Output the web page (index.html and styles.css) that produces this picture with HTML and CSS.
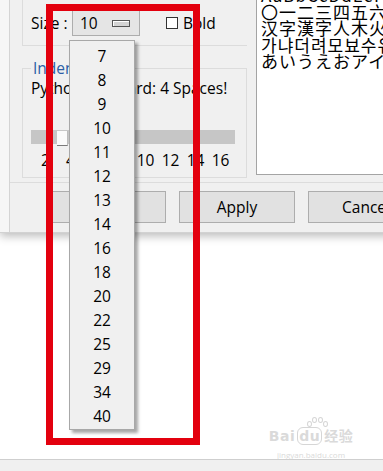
FILE: index.html
```html
<!DOCTYPE html>
<html lang="en">
<head>
    <meta charset="UTF-8">
    <meta name="viewport" content="width=device-width, initial-scale=1.0">
    <title>Font Settings</title>
    <link rel="stylesheet" href="styles.css">
</head>
<body>
    <div class="window">
        <div class="frame">
            <div class="panel">
                <div class="left-col">
                    <div class="font-box">
                        <div class="size-row">
                            <span class="label">Size :</span>
                            <div class="combo">
                                <span>10</span>
                                <svg class="combo-arrow" width="18" height="7" viewBox="0 0 18 7">
                                    <rect x="0.5" y="0.5" width="17" height="6" fill="#d4d4d4" stroke="#555555"/>
                                    <line x1="1" y1="1.5" x2="17" y2="1.5" stroke="#ffffff"/>
                                    <line x1="1.5" y1="1" x2="1.5" y2="6" stroke="#ffffff"/>
                                </svg>
                            </div>
                            <label class="check"><span class="box"></span>Bold</label>
                        </div>
                    </div>

                    <fieldset class="indent-box">
                        <legend>Indent Width</legend>
                        <p>Python Standard: 4 Spaces!</p>
                        <div class="track">
                            <div class="handle"></div>
                        </div>
                        <div class="ticks">
                            <span>2</span><span>4</span><span>6</span><span>8</span>
                            <span>10</span><span>12</span><span>14</span><span>16</span>
                        </div>
                    </fieldset>
                </div>

                <div class="sample">
                    <div class="sample-text">
                        <div>AaBbCcDdEeFfGgHhIiJj</div>
                        <div>〇一二三四五六七八九</div>
                        <div>汉字漢字人木火土金水</div>
                        <div>가냐더려모뵤수유즈치</div>
                        <div>あいうえおアイウエオ</div>
                    </div>
                </div>
            </div>

            <div class="buttons">
                <button>Ok</button>
                <button>Apply</button>
                <button>Cancel</button>
            </div>
        </div>
    </div>

    <!-- size dropdown -->
    <ul class="dropdown">
        <li>7</li><li>8</li><li>9</li><li>10</li>
        <li>11</li><li>12</li><li>13</li><li>14</li>
        <li>16</li><li>18</li><li>20</li><li>22</li>
        <li>25</li><li>29</li><li>34</li><li>40</li>
    </ul>

    <div class="highlight"></div>

    <div class="watermark">
        <div class="paw">
            <span></span><span></span><span></span><span></span>
        </div>
        <div class="wm-logo">Bai<span class="wm-du">du</span>经验</div>
        <div class="wm-url">jingyan.baidu.com</div>
    </div>

    <div class="taskbar"></div>
</body>
</html>
```

FILE: styles.css
```css
* {
    margin: 0;
    padding: 0;
    box-sizing: border-box;
}

body {
    font-family: 'Open Sans', 'Noto Sans', sans-serif;
    font-size: 15.5px;
    color: #000;
    background-color: #fff;
    width: 383px;
    height: 471px;
    overflow: hidden;
    position: relative;
}

/* Dialog window */
.window {
    height: 233px;
    background-color: #f6f6f6;
    padding-left: 9px;
    display: flex;
    box-shadow: 0 3px 9px rgba(0, 0, 0, 0.28);
    border-bottom: 1px solid #d2d2d2;
    width: 430px;
}

.frame {
    flex: 1;
    background-color: #f0f0f0;
    border-left: 1px solid #d4d4d4;
    display: flex;
    flex-direction: column;
}

.panel {
    height: 183px;
    border-bottom: 1px solid #dcdcdc;
    display: flex;
    padding-left: 12px;
}

.left-col {
    width: 225px;
    display: flex;
    flex-direction: column;
}

.font-box {
    height: 46px;
    border-left: 1px solid #dcdcdc;
    border-bottom: 1px solid #dcdcdc;
    padding: 10px 0 0 8px;
}

.size-row {
    display: flex;
    align-items: center;
    height: 26px;
}

.size-row .label {
    width: 41px;
}

.combo {
    width: 68px;
    height: 26px;
    background-color: #e5e5e5;
    border: 1px solid #adadad;
    display: flex;
    align-items: center;
    justify-content: space-between;
    padding: 0 9px 0 7px;
}

.combo-arrow {
    display: block;
}

.check {
    display: flex;
    align-items: center;
    margin-left: 26px;
}

.check .box {
    width: 12px;
    height: 12px;
    border: 1px solid #333;
    background-color: #fff;
    margin-right: 5px;
}

/* Indent width group */
.indent-box {
    margin-top: 12px;
    border: 1px solid #dcdcdc;
    padding: 0 8px 7px 8px;
    min-width: 0;
}

.indent-box legend {
    color: #2b5ea6;
    padding: 0 2px;
    line-height: 20px;
}

.indent-box p {
    line-height: 20px;
    white-space: nowrap;
}

.track {
    margin-top: 32px;
    width: 204px;
    height: 14px;
    background-color: #c6c6c6;
    position: relative;
}

.handle {
    position: absolute;
    left: 26px;
    top: 1px;
    width: 11px;
    height: 15px;
    background-color: #fafafa;
    border-bottom: 1px solid #7a7a7a;
    border-right: 1px solid #bcbcbc;
}

.ticks {
    display: flex;
    margin: 6px 0 0 2px;
    line-height: 20px;
}

.ticks span {
    width: 25px;
    text-align: center;
}

/* Sample text */
.sample {
    margin-left: 9px;
    flex: 1;
    height: 175px;
    background-color: #fff;
    border-left: 1px solid #a4a4a4;
    border-bottom: 1px solid #a4a4a4;
    overflow: hidden;
}

.sample-text {
    margin: -13px 0 0 4px;
    font-family: 'Noto Sans CJK SC', 'Noto Sans CJK JP', 'Noto Sans CJK KR', sans-serif;
    font-size: 17px;
    line-height: 16.5px;
    letter-spacing: 1px;
    white-space: nowrap;
}

/* Dialog buttons */
.buttons {
    display: flex;
    gap: 13px;
    padding-left: 40px;
    margin-top: 8px;
}

.buttons button {
    width: 116px;
    height: 32px;
    background-color: #e1e1e1;
    border: 1px solid #adadad;
    font-family: inherit;
    font-size: 15.5px;
    color: #000;
}

/* Dropdown list */
.dropdown {
    list-style: none;
    position: absolute;
    left: 69px;
    top: 40px;
    width: 66px;
    height: 390px;
    background-color: #f0f0f0;
    border: 1px solid #a8a8a8;
    box-shadow: 3px 3px 3px rgba(0, 0, 0, 0.35);
    padding-top: 3px;
}

.dropdown li {
    line-height: 24px;
    text-align: center;
}

/* Red annotation frame */
.highlight {
    position: absolute;
    left: 46px;
    top: 4px;
    width: 154px;
    height: 441px;
    border: 7px solid #e3000e;
}

/* Watermark */
.watermark {
    position: absolute;
    left: 265px;
    top: 416px;
    width: 92px;
    color: #dadada;
    text-align: center;
}

.paw {
    position: relative;
    height: 12px;
}

.paw span {
    position: absolute;
    width: 5px;
    height: 6px;
    border: 1px solid #d6d6d6;
    border-radius: 50%;
}

.paw span:nth-child(1) { left: 42px; top: 5px; }
.paw span:nth-child(2) { left: 47px; top: 1px; }
.paw span:nth-child(3) { left: 53px; top: 1px; }
.paw span:nth-child(4) { left: 58px; top: 5px; }

.wm-logo {
    font-family: 'DejaVu Sans', 'Noto Sans CJK SC', sans-serif;
    font-size: 14px;
    line-height: 16px;
    font-weight: bold;
    letter-spacing: 0.5px;
}

.wm-du {
    border: 1px solid #d6d6d6;
    border-radius: 6px;
    padding: 0 1px;
    margin: 0 2px;
}

.wm-url {
    font-size: 8px;
    line-height: 14px;
    margin-top: 4px;
}

.taskbar {
    position: absolute;
    left: 0;
    top: 459px;
    width: 100%;
    height: 12px;
    background-color: #f0f0f0;
    border-top: 1px solid #cfcfcf;
}
```
